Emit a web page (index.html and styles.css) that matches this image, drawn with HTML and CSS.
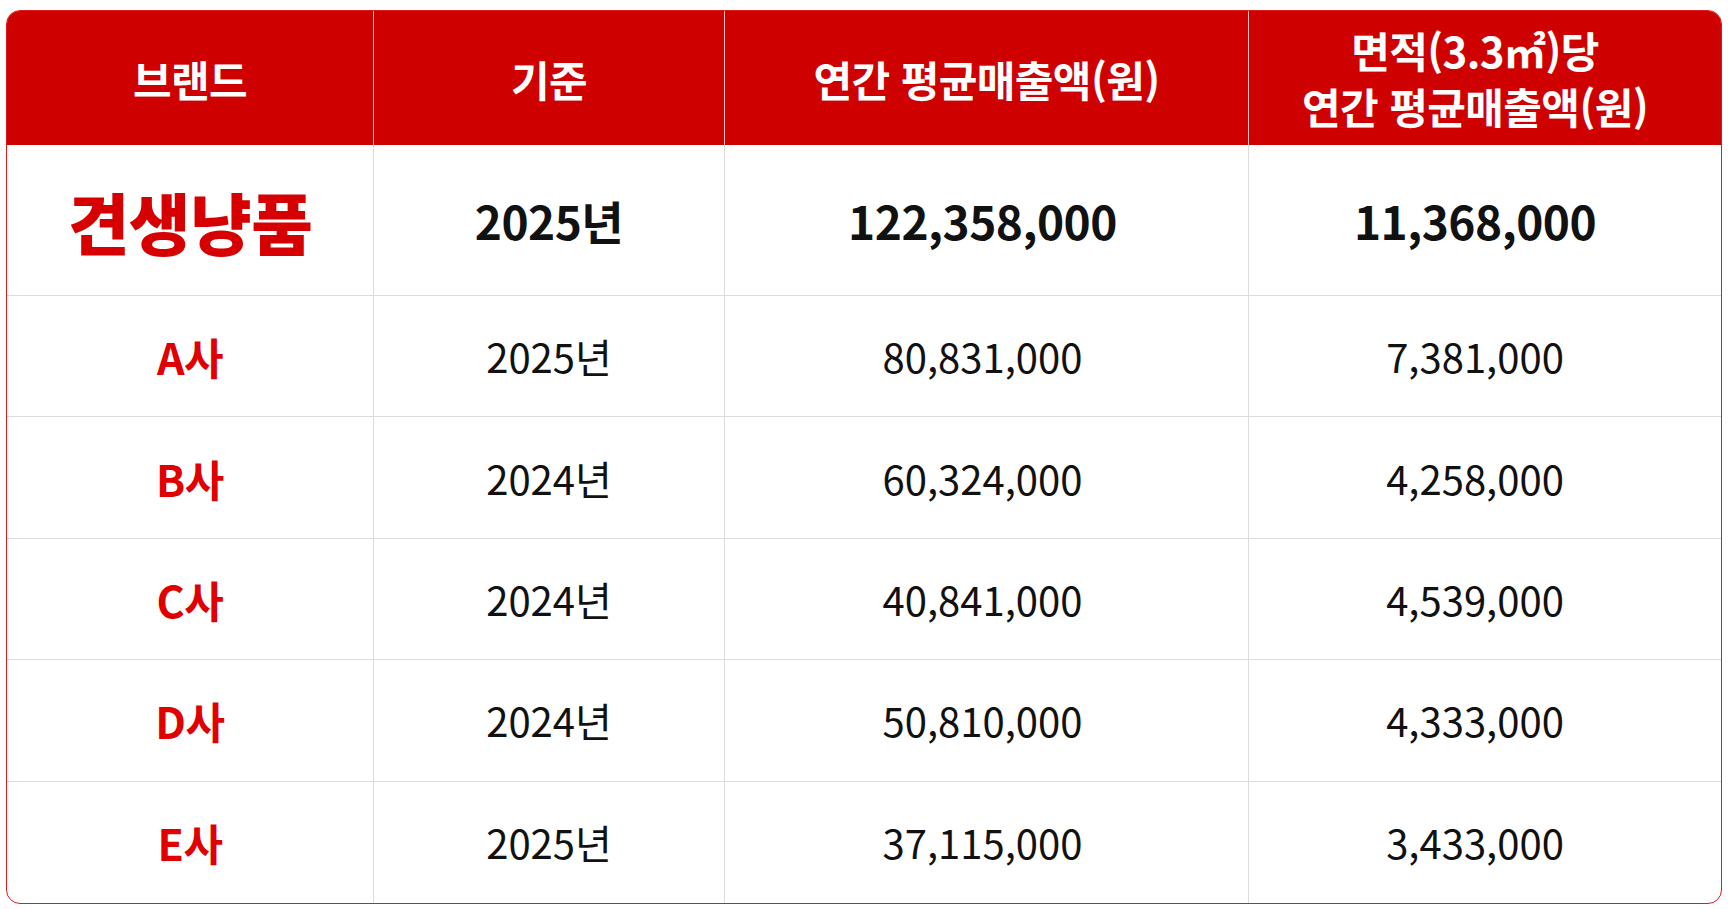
FILE: index.html
```html
<!DOCTYPE html>
<html lang="ko">
<head>
<meta charset="utf-8">
<title>브랜드 연간 평균매출액 비교</title>
<link rel="stylesheet" href="styles.css">
</head>
<body>
<div class="sales-table">
  <div class="cell head">브랜드</div>
  <div class="cell head">기준</div>
  <div class="cell head">연간 평균매출액(원)</div>
  <div class="cell head two-line"><span>면적(3.3㎡)당</span><span>연간 평균매출액(원)</span></div>

  <div class="cell hero-brand">견생냥품</div>
  <div class="cell hero-num">2025년</div>
  <div class="cell hero-num">122,358,000</div>
  <div class="cell hero-num">11,368,000</div>

  <div class="cell brand">A사</div>
  <div class="cell num">2025년</div>
  <div class="cell num">80,831,000</div>
  <div class="cell num">7,381,000</div>

  <div class="cell brand">B사</div>
  <div class="cell num">2024년</div>
  <div class="cell num">60,324,000</div>
  <div class="cell num">4,258,000</div>

  <div class="cell brand">C사</div>
  <div class="cell num">2024년</div>
  <div class="cell num">40,841,000</div>
  <div class="cell num">4,539,000</div>

  <div class="cell brand">D사</div>
  <div class="cell num">2024년</div>
  <div class="cell num">50,810,000</div>
  <div class="cell num">4,333,000</div>

  <div class="cell brand last">E사</div>
  <div class="cell num last">2025년</div>
  <div class="cell num last">37,115,000</div>
  <div class="cell num last">3,433,000</div>
</div>
</body>
</html>
```

FILE: styles.css
```css
html, body {
  margin: 0;
  padding: 0;
  background: #ffffff;
}

body {
  padding: 10px 8px 5px 6px;
  font-family: "Noto Sans CJK KR", "Noto Sans", sans-serif;
}

.sales-table {
  box-sizing: border-box;
  width: 1716px;
  height: 894px;
  display: grid;
  grid-template-columns: 367px 351px 524px 1fr;
  grid-template-rows: 134px 151px repeat(5, 1fr);
  border: 1.5px solid #e01a1a;
  border-radius: 14px;
  overflow: hidden;
  background: #ffffff;
}

.cell {
  display: flex;
  align-items: center;
  justify-content: center;
  border-right: 1px solid #dcdcdc;
  border-bottom: 1px solid #dcdcdc;
  color: #111111;
  text-align: center;
}

.cell:nth-child(4n - 1) {
  padding-right: 8px;
}

.cell:nth-child(4n) {
  border-right: none;
  padding-right: 20px;
}

.cell.last {
  border-bottom: none;
}

.head {
  background: #cf0000;
  color: #ffffff;
  font-weight: 700;
  font-size: 42px;
  letter-spacing: -0.6px;
  border-right-color: rgba(255, 255, 255, 0.75);
  border-bottom: none;
}

.head:nth-child(3) {
  padding-right: 0;
}

.head.two-line {
  flex-direction: column;
  line-height: 56px;
}

.hero-brand {
  color: #d70000;
  font-weight: 900;
  font-size: 67px;
  letter-spacing: -0.5px;
}

.hero-num {
  font-weight: 700;
  font-size: 46px;
  letter-spacing: -0.5px;
}

.brand {
  color: #e00000;
  font-weight: 700;
  font-size: 43px;
  letter-spacing: -0.5px;
}

.num {
  font-weight: 400;
  font-size: 40px;
  letter-spacing: 0;
}
```
